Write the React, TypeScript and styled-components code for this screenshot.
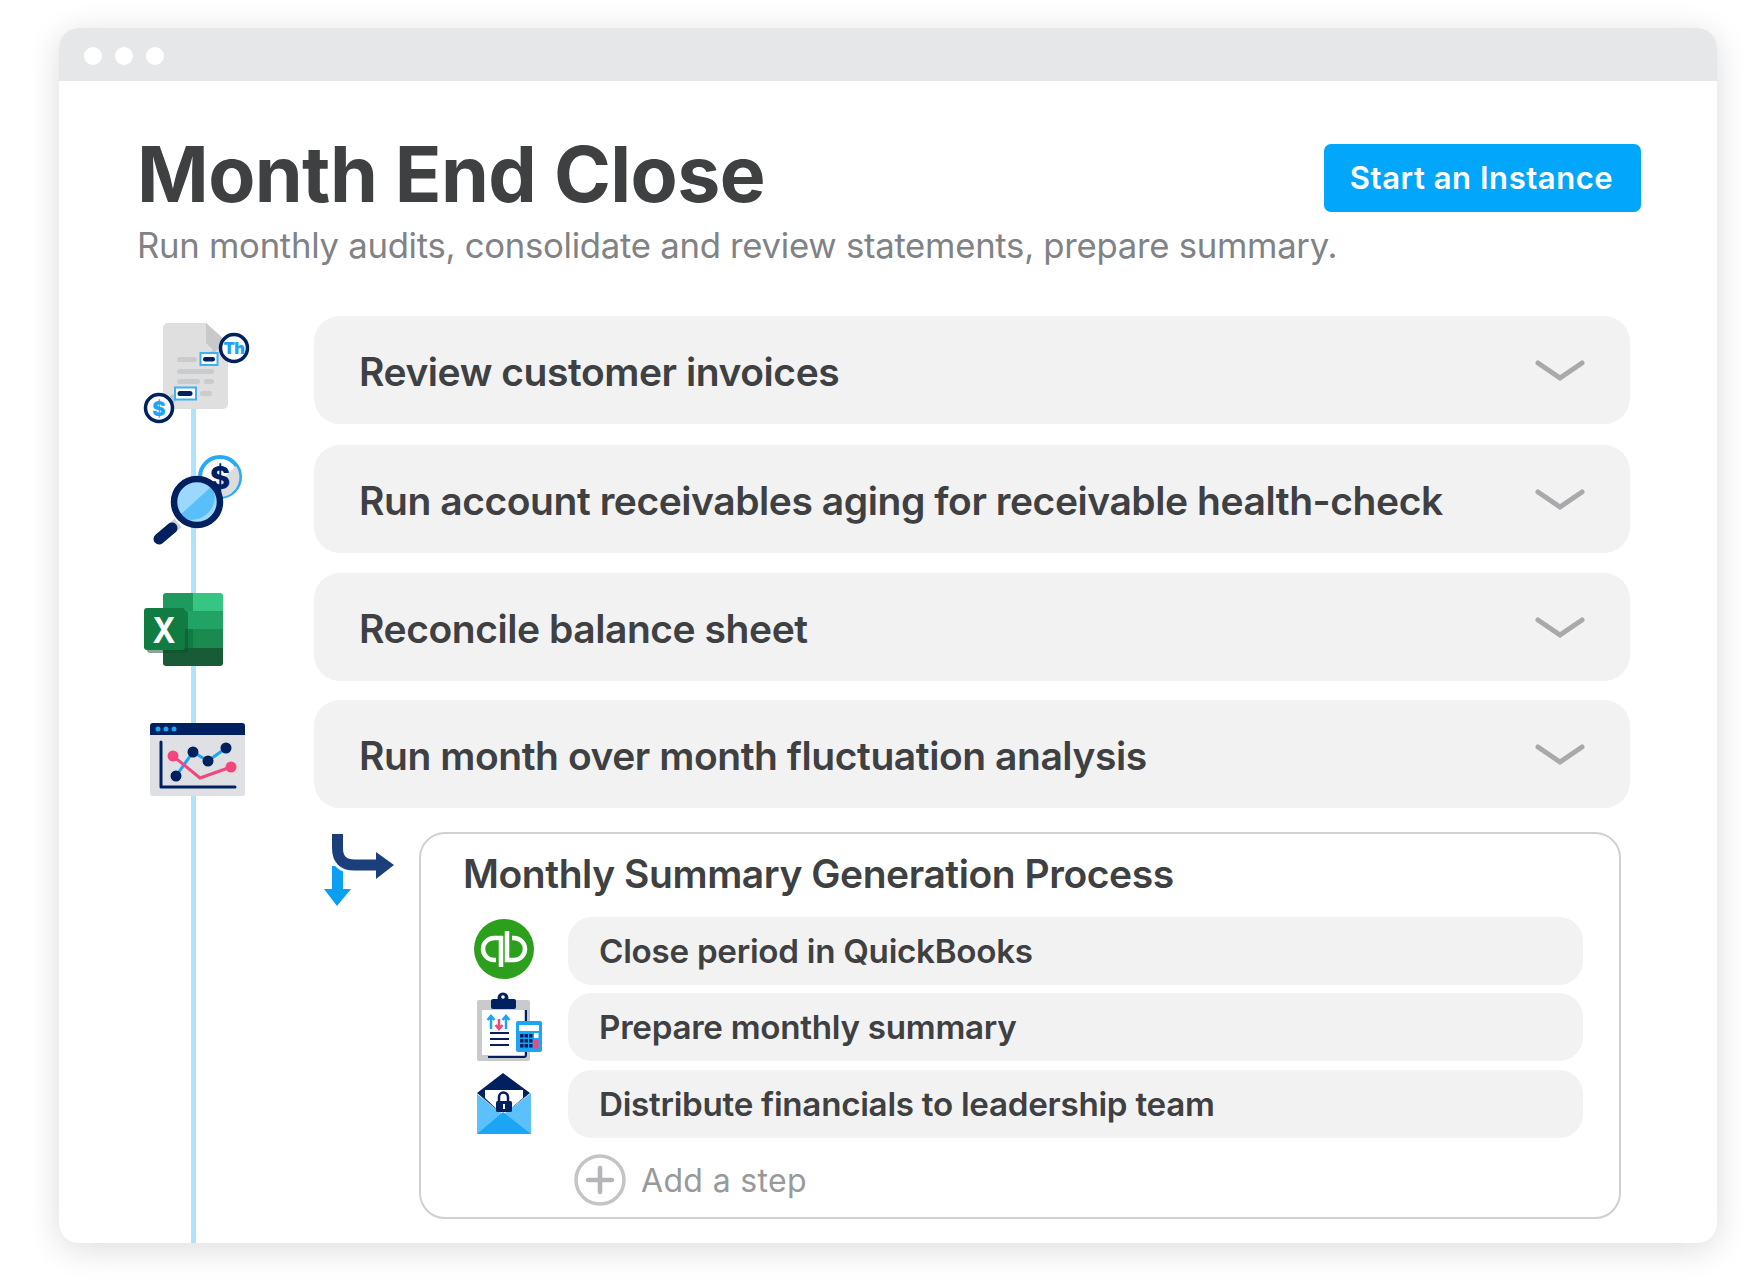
import React from "react";
import styled, { createGlobalStyle } from "styled-components";

const Global = createGlobalStyle`
  html, body { margin: 0; padding: 0; background: #fff; }
  body { font-family: Inter, "Liberation Sans", sans-serif; }
`;

const Page = styled.div`
  padding: 28px 46px 41px 59px;
  width: 1658px;
`;

const Window = styled.div`
  position: relative;
  height: 1215px;
  background: #fff;
  border-radius: 20px;
  box-shadow: 0 6px 34px rgba(0, 0, 0, 0.14);
  overflow: hidden;
`;

const TitleBar = styled.div`
  height: 53px;
  background: #e6e7e9;
  display: flex;
  align-items: center;
  gap: 13px;
  padding: 2px 0 0 25px;
  box-sizing: border-box;
`;

const Dot = styled.span`
  width: 18px;
  height: 18px;
  border-radius: 50%;
  background: #fff;
`;

const Body = styled.div`
  position: relative;
  padding: 0 0 0 79px;
`;

const Timeline = styled.div`
  position: absolute;
  left: 132px;
  top: 320px;
  height: 900px;
  width: 5px;
  background: #aee4fb;
`;

const Header = styled.header`
  display: flex;
  height: 235px;
`;

const HeaderText = styled.div`
  flex: none;
  width: 1187px;
  padding-top: 52px;
  margin-left: -1px;
  white-space: nowrap;
`;

const Title = styled.h1`
  margin: 0;
  font-size: 77px;
  line-height: 82px;
  font-weight: 700;
  color: #3e4042;
  letter-spacing: -0.6px;
`;

const Subtitle = styled.p`
  margin: 10px 0 0;
  font-size: 34.7px;
  line-height: 40px;
  color: #808285;
  font-weight: 400;
  letter-spacing: -0.27px;
`;

const StartButton = styled.button`
  margin-top: 63px;
  flex: none;
  width: 317px;
  height: 68px;
  border: 0;
  border-radius: 7px;
  padding: 0 2px 2px 0;
  background: #02a7fb;
  color: #fff;
  font: 600 31px Inter, sans-serif;
  letter-spacing: 0.55px;
`;

const Steps = styled.div`
  position: relative;
  display: flex;
  flex-direction: column;
  gap: 20px;
`;

const StepRow = styled.div`
  display: flex;
  gap: 66px;
  align-items: stretch;
  &:nth-child(2) { margin-top: 1px; }
  &:nth-child(4) { margin-top: -1px; }
`;

const IconSlot = styled.svg`
  width: 110px;
  height: 108px;
  flex: none;
  overflow: visible;
  display: block;
`;

const StepBar = styled.div`
  width: 1316px;
  height: 108px;
  box-sizing: border-box;
  padding: 2px 45px 0;
  border-radius: 26px;
  background: #f2f2f3;
  display: flex;
  align-items: center;
  justify-content: space-between;
`;

const StepLabel = styled.span`
  font-size: 39px;
  font-weight: 600;
  color: #3e4042;
  letter-spacing: -0.44px;
`;

const Chevron = styled.svg`
  width: 50px;
  height: 22px;
  flex: none;
`;

const ProcessRow = styled.div`
  display: flex;
  margin: 4px 0 0 176px;
`;

const BranchIcon = styled.svg`
  width: 105px;
  height: 80px;
  flex: none;
  overflow: visible;
`;

const Panel = styled.section`
  width: 1202px;
  height: 387px;
  box-sizing: border-box;
  border: 2px solid #cfd0d2;
  border-radius: 26px;
  padding: 14px 35px 0 42px;
`;

const PanelTitle = styled.h2`
  margin: 0 0 17px;
  font-size: 39px;
  line-height: 52px;
  font-weight: 600;
  color: #3e4042;
  letter-spacing: -0.44px;
`;

const SubList = styled.div`
  display: flex;
  flex-direction: column;
  gap: 8px;
`;

const SubRow = styled.div`
  display: flex;
  align-items: center;
  &:nth-child(3) { margin-top: 1px; }
`;

const SubIcon = styled.svg`
  width: 105px;
  height: 68px;
  flex: none;
  overflow: visible;
`;

const SubBar = styled.div`
  width: 1015px;
  height: 68px;
  box-sizing: border-box;
  padding: 0 32px 0 31px;
  border-radius: 24px;
  background: #f2f2f3;
  display: flex;
  align-items: center;
  font-size: 33.2px;
  font-weight: 600;
  color: #3e4042;
  letter-spacing: -0.28px;
`;

const AddRow = styled.div`
  display: flex;
  align-items: center;
  gap: 15px;
  margin: 16px 0 0 111px;
  color: #98999b;
  font-size: 32px;
  letter-spacing: 0.35px;
`;

const PlusIcon = styled.svg`
  width: 52px;
  height: 52px;
  flex: none;
`;

const NAVY = "#00205f";
const SKY = "#1ba6f5";

const DocIcon = () => (
  <IconSlot viewBox="138 316 110 108">
    <path d="M168 323h38l22 20v61a5 5 0 0 1-5 5h-55a5 5 0 0 1-5-5v-76a5 5 0 0 1 5-5z" fill="#dfdfe0" />
    <path d="M206 323l22 20-14 8-8-8z" fill="#c9c9cb" />
    <path d="M222 344l-12 14h-8z" fill="#c9c9cb" />
    <path d="M172 394l-10 12 8 2 8-10z" fill="#c4c4c6" />
    <g fill="#cacbcd">
      <rect x="177" y="357" width="20" height="5" rx="2.5" />
      <rect x="177" y="369" width="37" height="5" rx="2.5" />
      <rect x="177" y="379" width="23" height="5" rx="2.5" />
      <rect x="204" y="379" width="10" height="5" rx="2.5" />
      <rect x="200" y="391" width="12" height="5" rx="2.5" />
    </g>
    <rect x="200.5" y="353" width="17" height="12" fill="#fff" stroke="#3db2f2" strokeWidth="2" />
    <rect x="203" y="357" width="12" height="4.5" rx="2.2" fill={NAVY} />
    <rect x="175" y="387.5" width="21" height="12" fill="#fff" stroke="#3db2f2" strokeWidth="2" />
    <rect x="177.5" y="391" width="15" height="5" rx="2.5" fill={NAVY} />
    <circle cx="234" cy="348" r="13.5" fill="#fff" stroke={NAVY} strokeWidth="3.5" />
    <text x="234" y="354" textAnchor="middle" fontFamily="Inter" fontWeight="900" fontSize="16.5" letterSpacing="-0.5" fill={SKY}>Th</text>
    <circle cx="159" cy="408" r="13.5" fill="#fff" stroke={NAVY} strokeWidth="3.5" />
    <text x="159" y="415.5" textAnchor="middle" fontFamily="Inter" fontWeight="900" fontSize="20" fill={SKY}>$</text>
  </IconSlot>
);

const MagnifyIcon = () => (
  <IconSlot viewBox="138 445 110 108">
    <circle cx="220" cy="477" r="20" fill="#fff" stroke="#29abf2" strokeWidth="4" />
    <path d="M236 466a20 20 0 0 1-14 31l-10-8z" fill="#dcdcdd" />
    <text x="220" y="489" textAnchor="middle" fontFamily="Inter" fontWeight="800" fontSize="31" fill={NAVY}>$</text>
    <path d="M178 523l-6 5" stroke="#cfd0d2" strokeWidth="11" />
    <path d="M172 528l-13 11" stroke={NAVY} strokeWidth="11" strokeLinecap="round" />
    <circle cx="197" cy="502" r="23" fill="#9bd8fb" />
    <path d="M179 516l33-30a23 23 0 0 1-33 30z" fill="#58bff9" />
    <circle cx="197" cy="502" r="23" fill="none" stroke={NAVY} strokeWidth="6.5" />
  </IconSlot>
);

const ExcelIcon = () => (
  <IconSlot viewBox="138 573 110 108">
    <path d="M166 593h27v18h-30v-15a3 3 0 0 1 3-3z" fill="#1f9a5f" />
    <path d="M193 593h27a3 3 0 0 1 3 3v15h-30z" fill="#37c584" />
    <rect x="163" y="611" width="60" height="18" fill="#21a366" />
    <rect x="163" y="629" width="30" height="19" fill="#107c41" />
    <rect x="193" y="629" width="30" height="19" fill="#1b8a50" />
    <path d="M163 648h60v15a3 3 0 0 1-3 3h-54a3 3 0 0 1-3-3z" fill="#185c37" />
    <rect x="147" y="611" width="41" height="42" rx="3" fill="#0c4f2b" opacity=".5" />
    <rect x="144" y="608" width="41" height="42" rx="3" fill="#107c41" />
    <text x="164" y="642.5" textAnchor="middle" fontFamily="Inter" fontWeight="700" fontSize="36" textLength="23" lengthAdjust="spacingAndGlyphs" fill="#fff">X</text>
  </IconSlot>
);

const ChartIcon = () => (
  <IconSlot viewBox="138 700 110 108">
    <rect x="150" y="723" width="95" height="73" rx="3" fill="#dfe0e3" />
    <path d="M153 723h89a3 3 0 0 1 3 3v9h-95v-9a3 3 0 0 1 3-3z" fill={NAVY} />
    <g fill={SKY}>
      <circle cx="158" cy="729" r="2.5" />
      <circle cx="166" cy="729" r="2.5" />
      <circle cx="174" cy="729" r="2.5" />
    </g>
    <path d="M161 742v45h74" fill="none" stroke={NAVY} strokeWidth="3" strokeLinecap="round" strokeLinejoin="round" />
    <path d="M176 776l17-24 15 9 18-13" fill="none" stroke={SKY} strokeWidth="3" />
    <path d="M173 756l27 22 31-11" fill="none" stroke="#f3467f" strokeWidth="3" />
    <g fill={NAVY}>
      <circle cx="176" cy="776" r="5.5" />
      <circle cx="193" cy="752" r="5.5" />
      <circle cx="208" cy="761" r="5.5" />
      <circle cx="226" cy="748" r="5.5" />
    </g>
    <g fill="#f3467f">
      <circle cx="173" cy="756" r="5.5" />
      <circle cx="231" cy="767" r="5.5" />
    </g>
  </IconSlot>
);

const ChevronDown = () => (
  <Chevron viewBox="0 0 50 22">
    <path d="M3 3l22 15L47 3" fill="none" stroke="#a9a9ac" strokeWidth="5" strokeLinecap="round" strokeLinejoin="miter" />
  </Chevron>
);

const Branch = () => (
  <BranchIcon viewBox="314 832 105 80">
    <path d="M332 866h11v23h8l-14 17-13-17h8z" fill="#0a9ff0" />
    <path d="M337.5 834v14q0 17 17 17H380" fill="none" stroke="#fff" strokeWidth="17" />
    <path d="M337.5 834v14q0 17 17 17H380" fill="none" stroke="#1b3f7a" strokeWidth="11" />
    <path d="M376 852l18 13-18 14z" fill="#1b3f7a" />
  </BranchIcon>
);

const QuickBooks = () => (
  <SubIcon viewBox="463 917 105 68">
    <circle cx="504" cy="949" r="30" fill="#2ca01c" />
    <path d="M501 967v-29h-7a11 11 0 0 0 0 22h2" fill="none" stroke="#fff" strokeWidth="4.5" />
    <path d="M507 931v29h7a11 11 0 0 0 0-22h-2" fill="none" stroke="#fff" strokeWidth="4.5" />
  </SubIcon>
);

const Clipboard = () => (
  <SubIcon viewBox="463 993 105 68">
    <rect x="477" y="1000" width="53" height="61" rx="2" fill="#c9cacc" />
    <path d="M526 1010v45a2 2 0 0 1-2 2h-36" fill="none" stroke={NAVY} strokeWidth="2" />
    <rect x="482" y="1010" width="42" height="45" fill="#fff" />
    <circle cx="503" cy="998" r="5.5" fill={NAVY} />
    <circle cx="503" cy="997" r="1.8" fill="#fff" />
    <rect x="491" y="999" width="25" height="10" rx="2" fill={NAVY} />
    <path d="M491 1029v-12M487.5 1020l3.5-4 3.5 4M506 1029v-12M502.5 1020l3.5-4 3.5 4" fill="none" stroke={SKY} strokeWidth="2.5" />
    <path d="M499 1019v10M495.5 1025l3.5 4 3.5-4" fill="none" stroke="#f3467f" strokeWidth="2.5" />
    <path d="M490 1033h19M490 1039h19M490 1045h19" stroke={NAVY} strokeWidth="2" />
    <rect x="516" y="1021" width="26" height="31" rx="2" fill={SKY} />
    <rect x="519" y="1025" width="20" height="6" fill="#fff" />
    <rect x="534" y="1033" width="4.5" height="5" fill="#fff" />
    <g fill={NAVY}>
      <rect x="520" y="1034" width="3.5" height="3.5" /><rect x="524.5" y="1034" width="3.5" height="3.5" /><rect x="529" y="1034" width="3.5" height="3.5" />
      <rect x="520" y="1039" width="3.5" height="3.5" /><rect x="524.5" y="1039" width="3.5" height="3.5" /><rect x="529" y="1039" width="3.5" height="3.5" />
      <rect x="520" y="1044" width="3.5" height="3.5" /><rect x="524.5" y="1044" width="3.5" height="3.5" /><rect x="529" y="1044" width="3.5" height="3.5" />
    </g>
    <rect x="534" y="1040" width="4.5" height="8.5" fill="#f3467f" />
  </SubIcon>
);

const Envelope = () => (
  <SubIcon viewBox="463 1070 105 68">
    <path d="M503 1073l27 20-27 22-26-22z" fill={NAVY} />
    <path d="M485 1090h38v8l-20 17-18-17z" fill="#fff" />
    <path d="M477 1094l26 21 28-22v41h-54z" fill="#5cc0fa" />
    <path d="M477 1134l26-22 28 22z" fill={SKY} />
    <path d="M499 1102v-5a4.5 4.5 0 0 1 9 0v5" fill="none" stroke={NAVY} strokeWidth="2.5" />
    <rect x="496" y="1101" width="16" height="11" rx="1.5" fill={NAVY} />
    <rect x="503" y="1104" width="2" height="5" fill="#fff" />
  </SubIcon>
);

const steps = [
  { label: "Review customer invoices", Icon: DocIcon },
  { label: "Run account receivables aging for receivable health-check", Icon: MagnifyIcon },
  { label: "Reconcile balance sheet", Icon: ExcelIcon },
  { label: "Run month over month fluctuation analysis", Icon: ChartIcon },
];

const subSteps = [
  { label: "Close period in QuickBooks", Icon: QuickBooks },
  { label: "Prepare monthly summary", Icon: Clipboard },
  { label: "Distribute financials to leadership team", Icon: Envelope },
];

export default function App() {
  return (
    <Page>
      <Global />
      <Window>
        <TitleBar>
          <Dot />
          <Dot />
          <Dot />
        </TitleBar>
        <Body>
          <Timeline />
          <Header>
            <HeaderText>
              <Title>Month End Close</Title>
              <Subtitle>Run monthly audits, consolidate and review statements, prepare summary.</Subtitle>
            </HeaderText>
            <StartButton>Start an Instance</StartButton>
          </Header>
          <Steps>
            {steps.map(({ label, Icon }) => (
              <StepRow key={label}>
                <Icon />
                <StepBar>
                  <StepLabel>{label}</StepLabel>
                  <ChevronDown />
                </StepBar>
              </StepRow>
            ))}
            <ProcessRow>
              <Branch />
              <Panel>
                <PanelTitle>Monthly Summary Generation Process</PanelTitle>
                <SubList>
                  {subSteps.map(({ label, Icon }) => (
                    <SubRow key={label}>
                      <Icon />
                      <SubBar>{label}</SubBar>
                    </SubRow>
                  ))}
                </SubList>
                <AddRow>
                  <PlusIcon viewBox="0 0 52 52">
                    <circle cx="26" cy="26" r="24" fill="none" stroke="#c4c4c6" strokeWidth="3.5" />
                    <path d="M26 14v24M14 26h24" stroke="#b5b5b7" strokeWidth="4.5" strokeLinecap="round" />
                  </PlusIcon>
                  Add a step
                </AddRow>
              </Panel>
            </ProcessRow>
          </Steps>
        </Body>
      </Window>
    </Page>
  );
}
